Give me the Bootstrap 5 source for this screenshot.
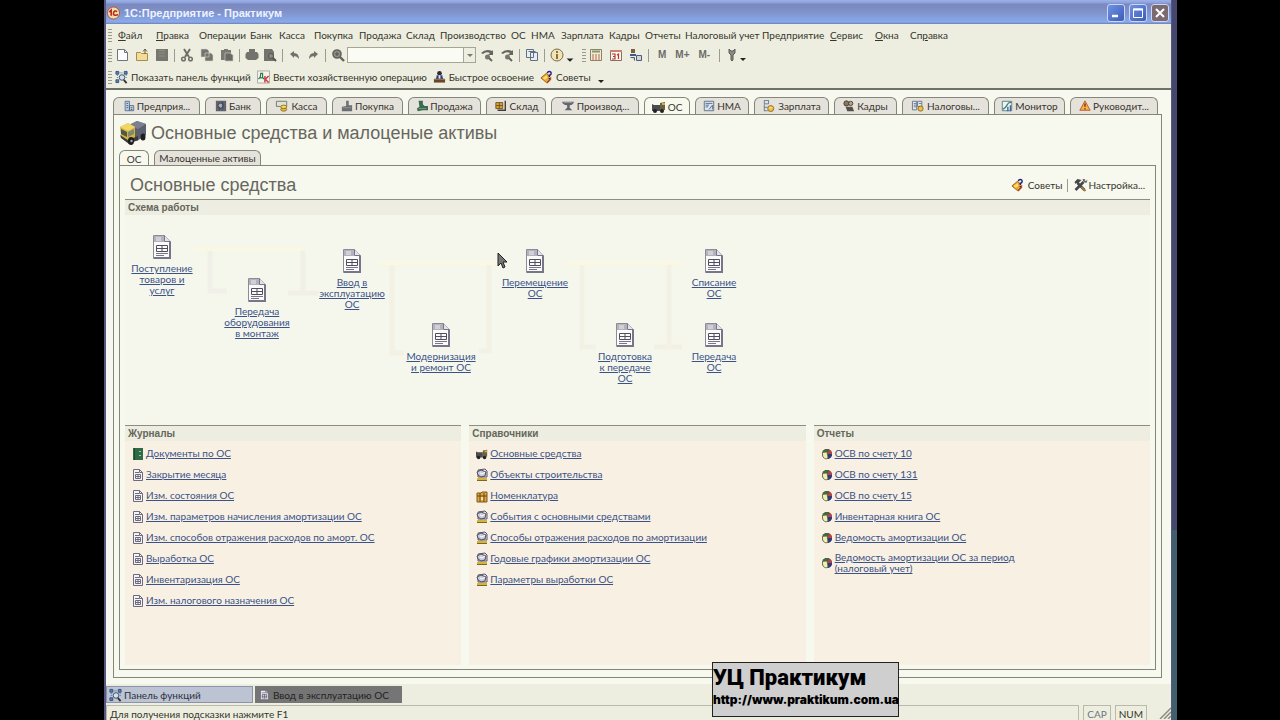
<!DOCTYPE html>
<html lang="ru">
<head>
<meta charset="utf-8">
<meta name="viewport" content="width=device-width, initial-scale=1">
<title>1С:Предприятие - Практикум</title>
<link href="https://cdn.jsdelivr.net/npm/bootstrap@5.3.0/dist/css/bootstrap.min.css" rel="stylesheet">
<script src="https://cdn.jsdelivr.net/npm/bootstrap@5.3.0/dist/js/bootstrap.bundle.min.js"></script>
<style>
:root{--olive:#edeee0;--paper:#f7f8ee;--line:#85867a;--ink:#35352c}
body{background:#000;color:var(--ink);font:10px/14px "Lato","Roboto","Liberation Sans",sans-serif}
button{background:none;border:0;padding:0;color:inherit;font:inherit;white-space:nowrap}
svg{display:block;flex:none}
.desk{padding:0 103px 0 104px}
.app-window{min-height:100vh;padding:0 6px 0 2px;background:linear-gradient(#45476e 0 530px,#41606f 530px) right/5px 100% no-repeat,#57597c}
.titlebar{height:24px;background:linear-gradient(#9db2ea 0,#8b9fdb 3px,#7a88bd 4px,#7f92cb 12px,#86a5e6 20px,#8aabea 22px,#6c7fb2 24px);color:#eef2ff;font:bold 11px/24px "Liberation Sans",sans-serif;padding:2px 2px 0 1px}
.win-btn{width:18px;height:18px;border:1px solid #c9d6f6;border-radius:3px;background:linear-gradient(135deg,#6f92e4,#3b5cb8)}
.win-btn.close-btn{background:#7b6a70}
.win-btn svg{margin:auto}
.bars{background:var(--olive);border-bottom:2px solid #6f7068;height:66px}
.grab{width:4px;height:13px;background:repeating-linear-gradient(#9a9b8e 0 1px,transparent 1px 3px);margin:0 6px 0 2px}
.tool-row .grab{margin-right:3px}
.menu-row{padding-top:4px}
.menu-grid{display:grid;grid-template-columns:38px 43px 51px 29px 35px 45px 47px 34px 71px 20px 30px 48px 36px 40px 77px 68px 45px 35px 40px}
.menu-grid button{text-align:left}
.icons-row{padding-top:5px}
.labels-row{padding-top:6px}
.label-btn{display:flex;gap:3px;margin-right:6px}
.tool-set{display:flex;gap:6px}
.vline{width:1px;height:13px;background:#9b9c90;margin:0 5px}
.find-box{width:117px;height:16px;border:1px solid #a5a698;border-radius:0;padding:0 2px;margin-left:2px;background:#fafbf2;font:inherit}
.find-drop{width:12px;height:16px;border:1px solid #a5a698;border-left:0;background:var(--olive);margin-right:4px}
.mem{display:flex;gap:9px;margin:0 4px;font:bold 10px/14px "Liberation Sans",sans-serif;color:#6c6c68}
.work{background:var(--paper);padding:7px 9px 6px 7px}
.main-tabs{display:grid;grid-template-columns:87fr 56fr 61fr 71fr 73fr 60fr 88fr 46fr 54fr 75fr 63fr 87fr 71fr 88fr;column-gap:5px;margin-right:4px}
.tab-btn{height:17px;border:1px solid var(--line);border-bottom:0;border-radius:6px 6px 0 0;background:#e5e2db;display:flex;align-items:center;justify-content:center;gap:2px;min-width:0;overflow:hidden}
.tab-btn.on{background:var(--paper);margin-bottom:-1px;height:18px}
.panel-box{border:1px solid var(--line);padding:5px 5px 7px}
.big-title{font:18px/22px "Liberation Sans",sans-serif;color:#67675e;margin:0}
.sub-tabs{gap:5px}
.sub-tabs .tab-btn{height:15px}
.sub-tabs .tab-btn.on{height:16px;width:30px}
.sub-tabs .second{width:107px}
.sub-head{height:33px;padding:5px 5px 0 5px}
.sec-title{border-top:1px solid #8d8e7d;background:#edeee1;font:bold 10px/15px "Liberation Sans",sans-serif;color:#66665a;margin:0 0 2px;padding-left:3px;height:16px}
.canvas{position:relative;height:210px;background:#f6f7ec}
.canvas a,.link-row a{color:#3a5288;text-decoration:underline}
.canvas .wires{position:absolute;left:0;top:0}
.doc-node{position:absolute;width:80px;text-align:center;line-height:11px}
.doc-node svg{margin:0 auto 4px}
.n1{left:-3px;top:20px}.n2{left:92px;top:63px}.n3{left:187px;top:34px}.n4{left:276px;top:108px}
.n5{left:370px;top:34px}.n6{left:460px;top:108px}.n7{left:549px;top:34px}.n8{left:549px;top:108px}
.pointer{position:absolute;left:372px;top:37px}
.lists{display:grid;grid-template-columns:repeat(3,1fr);gap:8px}
.list-col{background:#f8f0e2}
.link-row{min-height:21px;padding-left:7px;display:flex;align-items:center;gap:2px;line-height:11px}
.link-row svg{width:12px}
.foot{background:var(--olive);height:36px;padding-top:2px}
.task-row{gap:2px;margin-bottom:2px}
.task{height:17px;width:147px;padding-left:2px;text-align:left;background:#bcc3d3;border:1px solid #8c93a8;display:flex;align-items:center;gap:2px;color:#2c3040}
.task.dark{background:#757575;border-color:#757575;color:#222}
.stat{border:1px solid #b9baac;border-bottom:0;height:15px;line-height:16px;padding:0 3px}
.stamp{position:absolute;left:608px;bottom:3px;width:187px;height:55px;background:#cfcfcf;border:1px solid #222;color:#000;white-space:nowrap}
.stamp b{display:block;font:900 22px/30px "Roboto",sans-serif}
.stamp span{display:block;font:900 12px/14px "Inter",sans-serif}
u{text-underline-offset:1px}
</style>
</head>
<body>
<svg width="0" height="0" class="position-absolute" aria-hidden="true">
<defs>
<symbol id="i-doc" viewBox="0 0 18 24"><path d="M.5.5h11l6 6v17H.5z" fill="#fbfbfa" stroke="#8d8b98"/><path d="M1 1h10v6H1z" fill="#b4b2bd"/><path d="M3 3h5M3 5h5" stroke="#eee"/><path d="M11.500.5v6h6" fill="#e4e3ea" stroke="#77758a"/><path d="M3.500 10.500h11v6h-11zM3.500 13.500h11M9 10.500v6" fill="none" stroke="#504e60"/><path d="M3 18.500h12M3 20.500h8" stroke="#77758a"/><path d="M17 7v17M1 23h17" stroke="#77758a" stroke-width="2"/></symbol>
<symbol id="i-sdoc" viewBox="0 0 12 14"><path d="M1.500 1.500h6l3 3v8h-9z" fill="#f4f3f6" stroke="#6c6a7c"/><path d="M3 4.500h4M3.500 6.500h5v4h-5zM3 8.500h6M6 6v5M7.500 1.500v3h3" fill="none" stroke="#6c6a7c"/></symbol>
<symbol id="i-book" viewBox="0 0 12 14"><path d="M1 1h10v12H1z" fill="#2f6b45"/><path d="M2.500 1v12" stroke="#1b4a2c"/><path d="M7 4h2v1H7zM7 8h2v1H7z" fill="#9ec5a8"/></symbol>
<symbol id="i-ref" viewBox="0 0 12 14"><path d="M2 2l7-1 2 2v6H2z" fill="#e7e7ee" stroke="#55546a"/><path d="M1 4l4-2 5 2-1 4-4 1-3-2z" fill="#c9cbdc" stroke="#4d4c5e"/><path d="M4 5l2 1 3-2" stroke="#fff" fill="none"/><path d="M1 10h10v3H1z" fill="#d6b43a"/><path d="M1 12.500h10" stroke="#7d681f"/></symbol>
<symbol id="i-box" viewBox="0 0 12 14"><path d="M1 4h4l1-1h5v10H1z" fill="#e0a63c" stroke="#7c5a1e"/><path d="M1 7h10M4 4v9M8 4v9" stroke="#6b4d17"/><path d="M5 8h2v3H5z" fill="#fae094"/></symbol>
<symbol id="i-truck" viewBox="0 0 14 14"><path d="M0 4l2 1h6v6H0z" fill="#4c4c50"/><path d="M8 3l5-1v8l-5 1z" fill="#6b6040"/><path d="M10 3h3v2h-3z" fill="#d2b04a"/><circle cx="3" cy="11" r="2" fill="#222"/><circle cx="10" cy="11" r="2" fill="#222"/></symbol>
<symbol id="i-pie" viewBox="0 0 12 14"><circle cx="6" cy="7" r="5" fill="#36373f"/><path d="M6 7L1.500 5A5 5 0 0 1 8 2.400z" fill="#3f6d3c"/><path d="M6 7L8 2.400A5 5 0 0 1 11 7z" fill="#b54446"/><path d="M6 7h5a5 5 0 0 1-4 5z" fill="#2b3a80"/><path d="M1.500 5.500L6 5l1 6-2 1Q1 11 1.500 5.500z" fill="#eef1b0" stroke="#5c5f3c" stroke-width=".7"/></symbol>
<symbol id="i-tip" viewBox="0 0 14 14"><path d="M1 8l6-5 5 5-5 5z" fill="#efa92c" stroke="#9a5a14"/><path d="M7 13l5-5v2l-4 4z" fill="#b2442a"/><path d="M3 8l4-3 1 3-3 2z" fill="#ffe07a"/><path d="M8 3q0-2 2-2t2 2-2 2v2M10 8v1.500" fill="none" stroke="#23237e" stroke-width="1.500"/></symbol>
<symbol id="i-tools" viewBox="0 0 14 14"><path d="M2 12l8-8M11 12L4 5" stroke="#45454a" stroke-width="2.500"/><path d="M1 4l3-3 4 1-4 4-1-1-1 1z" fill="#45454a"/><path d="M9 1l1 3 3 1 1-3-2 1-1-1 1-1z" fill="#66666c"/><path d="M8 9l4 4" stroke="#a37c45" stroke-width="2"/></symbol>
<symbol id="i-panel" viewBox="0 0 14 14"><path d="M1 1h3v3H1zM10 1h3v3h-3zM1 10h3v3H1z" fill="#5b83ba" stroke="#33507e"/><path d="M5 2.500h4M2.500 5v4M12 5v3" stroke="#48699b" stroke-dasharray="1 1"/><circle cx="7.500" cy="7.500" r="3" fill="#cfe0f2" stroke="#3f4c62"/><path d="M9.500 10l3 3.500" stroke="#333" stroke-width="2"/></symbol>
<symbol id="i-dk" viewBox="0 0 14 14"><path d="M.5.5h13v13H.5z" fill="#f5f3ee" stroke="#aaa89e"/><path d="M2 8h5M3 8q1-2 1-5h2v5M2 8v1.500M7 8v1.500" fill="none" stroke="#2c7a4a" stroke-width="1.300"/><path d="M8.500 6v7M12.500 6L9 9.500l3.500 3.500" fill="none" stroke="#d23d3d" stroke-width="1.600"/></symbol>
<symbol id="i-man" viewBox="0 0 14 14"><circle cx="7" cy="3" r="2.500" fill="#2c2a34"/><path d="M3 10l1-5h6l1 5z" fill="#2d3f86"/><path d="M6 5h2v4H6z" fill="#dfe2ee"/><path d="M1 9h12v4H1z" fill="#6a4426"/><path d="M1 9.500h12" stroke="#a67a4b"/></symbol>
<symbol id="i-new" viewBox="0 0 14 14"><path d="M2.500 1.500h7l3 3v8h-10z" fill="#fcfdfd" stroke="#6d7482"/><path d="M9.500 1.500v3h3" fill="none" stroke="#6d7482"/></symbol>
<symbol id="i-open" viewBox="0 0 14 14"><path d="M1.500 4.500h4l1 1h6v7h-11z" fill="#f2dc98" stroke="#a78d4b"/><path d="M10 6V2M8 3.500L10 1l2 2.500" fill="none" stroke="#6b5c30"/></symbol>
<symbol id="i-save" viewBox="0 0 14 14"><path d="M1 1h12v12H1z" fill="#77776f"/><path d="M4 5h6M4 2.500h6M4 8h6" stroke="#8f8f86"/></symbol>
<symbol id="i-cut" viewBox="0 0 14 14"><path d="M4 1l5 8M10 1L5 9" stroke="#6f6f69" stroke-width="2"/><circle cx="3.500" cy="11" r="1.800" fill="none" stroke="#6f6f69" stroke-width="1.500"/><circle cx="10.500" cy="11" r="1.800" fill="none" stroke="#6f6f69" stroke-width="1.500"/></symbol>
<symbol id="i-copy" viewBox="0 0 14 14"><path d="M1 1h6l2 2v6H1zM5 5h6l2 2v6H5z" fill="#74746e" stroke="#d8d8cc" stroke-width=".6"/></symbol>
<symbol id="i-paste" viewBox="0 0 14 14"><path d="M1 2h3V1h4v1h3v10H1z" fill="#7a7a73"/><path d="M5 5h5l3 2v6H5z" fill="#6a6a64" stroke="#c6c6ba" stroke-width=".7"/></symbol>
<symbol id="i-print" viewBox="0 0 14 14"><path d="M4 1h6v3h2l1.500 2v4L11 12H3L.5 10V6L2 4h2z" fill="#73736d"/></symbol>
<symbol id="i-view" viewBox="0 0 14 14"><path d="M1 1h8l2 3v9H1z" fill="#73736d"/><circle cx="8" cy="8" r="2.500" fill="#8b8b84" stroke="#55554f"/><path d="M10 10l3 3" stroke="#55554f" stroke-width="2"/></symbol>
<symbol id="i-undo" viewBox="0 0 14 14"><path d="M2 6l4-3v2q5 0 5 6-2-3-5-3v2z" fill="#73736d"/></symbol>
<symbol id="i-redo" viewBox="0 0 14 14"><path d="M12 6L8 3v2q-5 0-5 6 2-3 5-3v2z" fill="#73736d"/></symbol>
<symbol id="i-find" viewBox="0 0 14 14"><circle cx="6" cy="6" r="4" fill="#8f8f88" stroke="#62625c" stroke-width="1.600"/><path d="M4 6h4M6 4v4" stroke="#555"/><path d="M9 9l4 4" stroke="#62625c" stroke-width="2.400"/></symbol>
<symbol id="i-fnext" viewBox="0 0 14 14"><path d="M1 5q5-5 11-2l1-1v5H8l2-2Q6 3 3 6z" fill="#666660"/><circle cx="7.500" cy="9" r="2.500" fill="#777770"/><path d="M9 10l3 3" stroke="#666660" stroke-width="2"/></symbol>
<symbol id="i-wins" viewBox="0 0 14 14"><path d="M1.500 1.500h7v8h-7zM5.500 4.500h7v8h-7z" fill="#e8eef2" stroke="#5f7180"/><path d="M3.500 3.500h7" stroke="#5f7180"/></symbol>
<symbol id="i-info" viewBox="0 0 14 14"><circle cx="7" cy="7" r="6" fill="#f4e3b2" stroke="#756c52"/><path d="M7 3v2M7 6v5" stroke="#6b5722" stroke-width="1.600"/></symbol>
<symbol id="i-calc" viewBox="0 0 14 14"><path d="M1.500 1.500h11v11h-11z" fill="#f3ead6" stroke="#8d8168"/><path d="M3 3.500h8" stroke="#7c9a6c" stroke-width="2"/><path d="M3 7h8M3 9h8M3 11h8" stroke="#b56a4e" stroke-dasharray="2 1"/></symbol>
<symbol id="i-cal" viewBox="0 0 14 14"><path d="M1.500 2.500h11v10h-11z" fill="#fbf5ee" stroke="#8c6c60"/><path d="M1 2h12v2H1z" fill="#c98370"/><path d="M3 6h3v5H3M4 8.500h2M8 7l1.500-1v5" fill="none" stroke="#b3392e" stroke-width="1.200"/></symbol>
<symbol id="i-users" viewBox="0 0 14 14"><path d="M2 1h4v4H2z" fill="#7b5f3b"/><path d="M1 6h6v2H1z" fill="#3e5a85"/><path d="M7.500 7.500h5v5h-5zM1.500 9.500h4v3" fill="#cfd5df" stroke="#4d5d77"/></symbol>
<symbol id="i-wrench" viewBox="0 0 14 14"><path d="M4 1v4l2 2v5q1 2 2 0V7l2-2V1L8 3H6z" fill="#8a8a86" stroke="#5b5b56"/></symbol>
<symbol id="i-down" viewBox="0 0 8 14"><path d="M1 10h6l-3 3z" fill="#222"/></symbol>
<symbol id="i-firm" viewBox="0 0 14 14"><path d="M2.500 1.500h5v11h-5zM7.500 6.500h5v6h-5z" fill="#c4d2e0" stroke="#4f6a8a"/><path d="M4 4h2M4 6.500h2M4 9h2M9 9h2M9 11h2" stroke="#35527b"/></symbol>
<symbol id="i-safe" viewBox="0 0 14 14"><path d="M1 1h12v12H1z" fill="#63656b"/><circle cx="6.500" cy="6.500" r="3" fill="#a9abb0" stroke="#35363b"/><path d="M5 12v-4M9 2v9" stroke="#2c4a72"/></symbol>
<symbol id="i-cash" viewBox="0 0 14 14"><path d="M.5 1.500h12v6H.5z" fill="#dfe2d2" stroke="#6c705e"/><ellipse cx="9" cy="11" rx="3.500" ry="2" fill="#e6b93a" stroke="#8a6a1a"/><ellipse cx="9" cy="8" rx="3.500" ry="2" fill="#f5d866" stroke="#8a6a1a"/></symbol>
<symbol id="i-buy" viewBox="0 0 14 14"><path d="M6 1h3v5h4v7H1V8l5-1z" fill="#6b6f74"/><path d="M2 9h10" stroke="#94989c"/></symbol>
<symbol id="i-sell" viewBox="0 0 14 14"><path d="M3 1h5v4l2 2h4v5H8l-6 1-1-3 3-2z" fill="#3c6a4c"/><path d="M3 10h9" stroke="#7ba386"/></symbol>
<symbol id="i-stock" viewBox="0 0 14 14"><path d="M1 3h8v7H1z" fill="#d9a13a" stroke="#6d4b14"/><path d="M5 3v7M1 6.500h8" stroke="#6d4b14"/><path d="M12 1v11H3" fill="none" stroke="#3f3d3a" stroke-width="1.600"/></symbol>
<symbol id="i-anvil" viewBox="0 0 14 14"><path d="M0 2h14q-1 4-5 4v3l3 3H3l3-3V6Q1 6 0 2z" fill="#63656a"/><path d="M2 3h10" stroke="#9da0a5"/></symbol>
<symbol id="i-nma" viewBox="0 0 14 14"><path d="M1.500 1.500h11v11h-11z" fill="#dbe4ec" stroke="#566a80"/><path d="M3 4h8M3 6h4M3 8h3M7 11l4-5v5" fill="none" stroke="#4a6788"/></symbol>
<symbol id="i-pay" viewBox="0 0 14 14"><path d="M1.500.5h5v4h-5zM1.500 5v8M1.500 8.500h4M1.500 12.500h4" fill="#d9e3ee" stroke="#5a6f88"/><circle cx="9" cy="10" r="3.500" fill="#ecc048" stroke="#876418"/><path d="M7 9h4" stroke="#fff0a8"/></symbol>
<symbol id="i-hr" viewBox="0 0 14 14"><circle cx="4" cy="4" r="3" fill="#8a7a5c" stroke="#3f3a30"/><circle cx="9" cy="4" r="2.500" fill="#b8a582" stroke="#3f3a30"/><path d="M3 8h8l2 5H5z" fill="#55504a"/></symbol>
<symbol id="i-tax" viewBox="0 0 14 14"><path d="M.5 1.500h5v10h-5zM6.500 1.500h5v6h-5z" fill="#e6ebf0" stroke="#5c6c80"/><path d="M2 4h3M2 6h3M2 8h3M8 4h3" stroke="#5c6c80"/><circle cx="10" cy="10" r="3" fill="#ecc048" stroke="#876418"/></symbol>
<symbol id="i-mon" viewBox="0 0 14 14"><path d="M1.500 1.500h11v11h-11z" fill="#edf3f0" stroke="#4e7186"/><path d="M2 11q3-1 5-5t5-3" fill="none" stroke="#3d8060" stroke-width="1.400"/><path d="M8 8v5M11 6v7" stroke="#3b62a4" stroke-width="1.600"/></symbol>
<symbol id="i-warn" viewBox="0 0 14 14"><path d="M7 1l6 11H1z" fill="#f5b14a" stroke="#b5521e" stroke-linejoin="round"/><path d="M7 4v4M7 9.500V11" stroke="#6b2410" stroke-width="1.500"/></symbol>
</defs>
</svg>

<div class="desk">
<main class="app-window d-flex flex-column position-relative">
  <header class="titlebar d-flex align-items-center gap-1">
    <svg width="13" height="14" viewBox="0 0 14 14"><circle cx="7" cy="7" r="6.500" fill="#f1dcae" stroke="#b0522d"/><path d="M2.500 6L4.500 4v6M11 5.500Q8 3.500 7 7t5 2" fill="none" stroke="#b8281e" stroke-width="1.700"/></svg>
    <span class="flex-grow-1">1С:Предприятие - Практикум</span>
    <button class="win-btn" aria-label="Свернуть"><svg width="12" height="12"><path d="M2 9h6" stroke="#fff" stroke-width="2.500"/></svg></button>
    <button class="win-btn" aria-label="Развернуть"><svg width="12" height="12"><path d="M1.500 2h9v8.500h-9z" fill="none" stroke="#fff"/><path d="M1 2.500h10" stroke="#fff" stroke-width="2"/></svg></button>
    <button class="win-btn close-btn" aria-label="Закрыть"><svg width="12" height="12"><path d="M2 2l8 8M10 2l-8 8" stroke="#fff" stroke-width="2"/></svg></button>
  </header>

  <div class="bars">
    <nav class="menu-row d-flex align-items-center">
      <span class="grab"></span>
      <div class="menu-grid">
        <button><u>Ф</u>айл</button><button><u>П</u>равка</button><button>Операции</button><button>Банк</button><button>Касса</button><button>Покупка</button><button>Продажа</button><button>Склад</button><button>Производство</button><button>ОС</button><button>НМА</button><button>Зарплата</button><button>Кадры</button><button>Отчеты</button><button>Налоговый учет</button><button>Предприятие</button><button><u>С</u>ервис</button><button><u>О</u>кна</button><button>Сп<u>р</u>авка</button>
      </div>
    </nav>
    <div class="tool-row icons-row d-flex align-items-center">
      <span class="grab"></span>
      <div class="tool-set">
        <button aria-label="Новый"><svg width="14" height="14"><use href="#i-new"/></svg></button>
        <button aria-label="Открыть"><svg width="14" height="14"><use href="#i-open"/></svg></button>
        <button aria-label="Сохранить"><svg width="14" height="14"><use href="#i-save"/></svg></button>
      </div>
      <span class="vline"></span>
      <div class="tool-set">
        <button aria-label="Вырезать"><svg width="14" height="14"><use href="#i-cut"/></svg></button>
        <button aria-label="Копировать"><svg width="14" height="14"><use href="#i-copy"/></svg></button>
        <button aria-label="Вставить"><svg width="14" height="14"><use href="#i-paste"/></svg></button>
      </div>
      <span class="vline"></span>
      <div class="d-flex gap-1">
        <button aria-label="Печать"><svg width="14" height="14"><use href="#i-print"/></svg></button>
        <button aria-label="Просмотр"><svg width="14" height="14"><use href="#i-view"/></svg></button>
      </div>
      <span class="vline"></span>
      <div class="d-flex gap-1">
        <button aria-label="Отменить"><svg width="14" height="14"><use href="#i-undo"/></svg></button>
        <button aria-label="Вернуть"><svg width="14" height="14"><use href="#i-redo"/></svg></button>
      </div>
      <span class="vline"></span>
      <button aria-label="Найти"><svg width="14" height="14"><use href="#i-find"/></svg></button>
      <input class="find-box" type="text" aria-label="Поиск">
      <button class="find-drop" aria-label="История поиска"><svg width="10" height="12" class="mx-auto"><path d="M2 5h6l-3 3z" fill="#777"/></svg></button>
      <div class="tool-set">
        <button aria-label="Найти следующее"><svg width="14" height="14"><use href="#i-fnext"/></svg></button>
        <button aria-label="Найти предыдущее"><svg width="14" height="14"><use href="#i-fnext"/></svg></button>
      </div>
      <span class="vline"></span>
      <button aria-label="Окна"><svg width="14" height="14"><use href="#i-wins"/></svg></button>
      <span class="vline"></span>
      <button aria-label="Справка"><svg width="14" height="14"><use href="#i-info"/></svg></button>
      <button class="me-1" aria-label="Ещё"><svg width="12" height="16"><use href="#i-down"/></svg></button>
      <span class="grab"></span>
      <div class="tool-set">
        <button aria-label="Калькулятор"><svg width="14" height="14"><use href="#i-calc"/></svg></button>
        <button aria-label="Календарь"><svg width="14" height="14"><use href="#i-cal"/></svg></button>
        <button aria-label="Пользователи"><svg width="14" height="14"><use href="#i-users"/></svg></button>
      </div>
      <span class="vline"></span>
      <div class="mem"><button>M</button><button>M+</button><button>M-</button></div>
      <span class="vline"></span>
      <button aria-label="Сервис"><svg width="14" height="14"><use href="#i-wrench"/></svg></button>
      <button aria-label="Ещё"><svg width="8" height="16"><use href="#i-down"/></svg></button>
    </div>
    <div class="tool-row labels-row d-flex align-items-center">
      <span class="grab"></span>
      <button class="label-btn"><svg width="13" height="14"><use href="#i-panel"/></svg>Показать панель функций</button>
      <button class="label-btn"><svg width="13" height="14"><use href="#i-dk"/></svg>Ввести хозяйственную операцию</button>
      <button class="label-btn"><svg width="13" height="14"><use href="#i-man"/></svg>Быстрое освоение</button>
      <button class="label-btn"><svg width="13" height="14"><use href="#i-tip"/></svg>Советы</button>
      <button aria-label="Ещё"><svg width="8" height="16"><use href="#i-down"/></svg></button>
    </div>
  </div>

  <section class="work flex-grow-1 d-flex flex-column">
    <div class="main-tabs">
      <button class="tab-btn"><svg width="12" height="12"><use href="#i-firm"/></svg>Предприя...</button>
      <button class="tab-btn"><svg width="12" height="12"><use href="#i-safe"/></svg>Банк</button>
      <button class="tab-btn"><svg width="14" height="12"><use href="#i-cash"/></svg>Касса</button>
      <button class="tab-btn"><svg width="12" height="12"><use href="#i-buy"/></svg>Покупка</button>
      <button class="tab-btn"><svg width="12" height="12"><use href="#i-sell"/></svg>Продажа</button>
      <button class="tab-btn"><svg width="14" height="12"><use href="#i-stock"/></svg>Склад</button>
      <button class="tab-btn"><svg width="14" height="12"><use href="#i-anvil"/></svg>Производ...</button>
      <button class="tab-btn on"><svg width="14" height="14"><use href="#i-truck"/></svg>ОС</button>
      <button class="tab-btn"><svg width="12" height="12"><use href="#i-nma"/></svg>НМА</button>
      <button class="tab-btn"><svg width="14" height="12"><use href="#i-pay"/></svg>Зарплата</button>
      <button class="tab-btn"><svg width="12" height="12"><use href="#i-hr"/></svg>Кадры</button>
      <button class="tab-btn"><svg width="14" height="12"><use href="#i-tax"/></svg>Налоговы...</button>
      <button class="tab-btn"><svg width="12" height="12"><use href="#i-mon"/></svg>Монитор</button>
      <button class="tab-btn"><svg width="12" height="12"><use href="#i-warn"/></svg>Руководит...</button>
    </div>
    <div class="panel-box flex-grow-1 d-flex flex-column">
      <div class="d-flex align-items-center gap-1 mb-1">
        <svg width="28" height="26" viewBox="0 0 28 26"><path d="M10 5l8-4 9 3v11l-9 6-8-4z" fill="#5b6070"/><path d="M10 5l8-4 9 3-8 5z" fill="#7b8091"/><path d="M1 7l8-4 7 4v12l-5 2-9-5z" fill="#d9b23a"/><path d="M1 7l8-4 7 4-7 4z" fill="#f0d667"/><path d="M2 9l6 3v5l-6-3z" fill="#4b5a4e"/><path d="M9 12l6-3v5l-6 3z" fill="#7e8a70"/><path d="M1 15l8 5 10-4v4l-9 4-8-6z" fill="#3f3c38"/><ellipse cx="12" cy="21" rx="3" ry="4" fill="#1d1d1f"/><ellipse cx="24" cy="17" rx="2.500" ry="3.500" fill="#1d1d1f"/><circle cx="12.500" cy="21" r="1.200" fill="#aaa"/></svg>
        <h1 class="big-title">Основные средства и малоценые активы</h1>
      </div>
      <div class="sub-tabs d-flex">
        <button class="tab-btn on">ОС</button><button class="tab-btn second">Малоценные активы</button>
      </div>
      <div class="panel-box flex-grow-1 d-flex flex-column pt-0 pb-1">
        <div class="sub-head d-flex justify-content-between align-items-center">
          <h2 class="big-title">Основные средства</h2>
          <div class="d-flex align-items-center">
            <button class="d-flex gap-1"><svg width="13" height="14"><use href="#i-tip"/></svg>Советы</button>
            <span class="vline"></span>
            <button class="d-flex"><svg width="15" height="14"><use href="#i-tools"/></svg>Настройка...</button>
          </div>
        </div>
        <h3 class="sec-title mb-0">Схема работы</h3>
        <div class="canvas">
          <svg class="wires" width="620" height="150" aria-hidden="true">
            <path d="M70 34h108" stroke="#faf8e2" stroke-width="4"/><path d="M85 36v40h17M178 36v42h-15h30" stroke="#f0efe8" stroke-width="5" fill="none"/>
            <path d="M254 48h120" stroke="#faf8e2" stroke-width="4"/><path d="M267 50v88h12M364 50v86h-10" stroke="#f3f1e4" stroke-width="5" fill="none"/>
            <path d="M440 48h118" stroke="#faf8e2" stroke-width="4"/><path d="M457 50v82h14M544 50v82M529 132h28" stroke="#f3f1e4" stroke-width="5" fill="none"/>
          </svg>
          <a href="#" class="doc-node n1"><svg width="18" height="24"><use href="#i-doc"/></svg>Поступление<br>товаров и<br>услуг</a>
          <a href="#" class="doc-node n2"><svg width="18" height="24"><use href="#i-doc"/></svg>Передача<br>оборудования<br>в монтаж</a>
          <a href="#" class="doc-node n3"><svg width="18" height="24"><use href="#i-doc"/></svg>Ввод в<br>эксплуатацию<br>ОС</a>
          <a href="#" class="doc-node n4"><svg width="18" height="24"><use href="#i-doc"/></svg>Модернизация<br>и ремонт ОС</a>
          <a href="#" class="doc-node n5"><svg width="18" height="24"><use href="#i-doc"/></svg>Перемещение<br>ОС</a>
          <a href="#" class="doc-node n6"><svg width="18" height="24"><use href="#i-doc"/></svg>Подготовка<br>к передаче<br>ОС</a>
          <a href="#" class="doc-node n7"><svg width="18" height="24"><use href="#i-doc"/></svg>Списание<br>ОС</a>
          <a href="#" class="doc-node n8"><svg width="18" height="24"><use href="#i-doc"/></svg>Передача<br>ОС</a>
          <svg class="pointer" width="12" height="18"><path d="M1 1v13l3-3 2 5 2-1-2-5h4z" fill="#777" stroke="#222"/></svg>
        </div>
        <div class="lists flex-grow-1">
          <section class="list-col"><h3 class="sec-title">Журналы</h3>
            <div class="link-row"><svg height="14"><use href="#i-book"/></svg><a href="#">Документы по ОС</a></div>
            <div class="link-row"><svg height="14"><use href="#i-sdoc"/></svg><a href="#">Закрытие месяца</a></div>
            <div class="link-row"><svg height="14"><use href="#i-sdoc"/></svg><a href="#">Изм. состояния ОС</a></div>
            <div class="link-row"><svg height="14"><use href="#i-sdoc"/></svg><a href="#">Изм. параметров начисления амортизации ОС</a></div>
            <div class="link-row"><svg height="14"><use href="#i-sdoc"/></svg><a href="#">Изм. способов отражения расходов по аморт. ОС</a></div>
            <div class="link-row"><svg height="14"><use href="#i-sdoc"/></svg><a href="#">Выработка ОС</a></div>
            <div class="link-row"><svg height="14"><use href="#i-sdoc"/></svg><a href="#">Инвентаризация ОС</a></div>
            <div class="link-row"><svg height="14"><use href="#i-sdoc"/></svg><a href="#">Изм. налогового назначения ОС</a></div>
          </section>
          <section class="list-col"><h3 class="sec-title">Справочники</h3>
            <div class="link-row"><svg height="14"><use href="#i-truck"/></svg><a href="#">Основные средства</a></div>
            <div class="link-row"><svg height="14"><use href="#i-ref"/></svg><a href="#">Объекты строительства</a></div>
            <div class="link-row"><svg height="14"><use href="#i-box"/></svg><a href="#">Номенклатура</a></div>
            <div class="link-row"><svg height="14"><use href="#i-ref"/></svg><a href="#">События с основными средствами</a></div>
            <div class="link-row"><svg height="14"><use href="#i-ref"/></svg><a href="#">Способы отражения расходов по амортизации</a></div>
            <div class="link-row"><svg height="14"><use href="#i-ref"/></svg><a href="#">Годовые графики амортизации ОС</a></div>
            <div class="link-row"><svg height="14"><use href="#i-ref"/></svg><a href="#">Параметры выработки ОС</a></div>
          </section>
          <section class="list-col"><h3 class="sec-title">Отчеты</h3>
            <div class="link-row"><svg height="14"><use href="#i-pie"/></svg><a href="#">ОСВ по счету 10</a></div>
            <div class="link-row"><svg height="14"><use href="#i-pie"/></svg><a href="#">ОСВ по счету 131</a></div>
            <div class="link-row"><svg height="14"><use href="#i-pie"/></svg><a href="#">ОСВ по счету 15</a></div>
            <div class="link-row"><svg height="14"><use href="#i-pie"/></svg><a href="#">Инвентарная книга ОС</a></div>
            <div class="link-row"><svg height="14"><use href="#i-pie"/></svg><a href="#">Ведомость амортизации ОС</a></div>
            <div class="link-row mt-1"><svg height="14"><use href="#i-pie"/></svg><a href="#">Ведомость амортизации ОС за период<br>(налоговый учет)</a></div>
          </section>
        </div>
      </div>
    </div>
  </section>

  <footer class="foot">
    <div class="task-row d-flex">
      <button class="task"><svg width="13" height="14"><use href="#i-panel"/></svg>Панель функций</button>
      <button class="task dark"><svg width="13" height="12"><use href="#i-sdoc"/></svg>Ввод в эксплуатацию ОС</button>
    </div>
    <div class="d-flex gap-1">
      <div class="stat flex-grow-1">Для получения подсказки нажмите F1</div>
      <div class="stat text-secondary">CAP</div>
      <div class="stat">NUM</div>
      <svg width="20" height="14"><path d="M9 14L20 3M13 14l7-7M17 14l3-3" stroke="#8c8d80" stroke-width="1.500"/></svg>
    </div>
  </footer>
  <aside class="stamp"><b>УЦ Практикум</b><span>http://www.praktikum.com.ua</span></aside>
</main>
</div>
</body>
</html>
